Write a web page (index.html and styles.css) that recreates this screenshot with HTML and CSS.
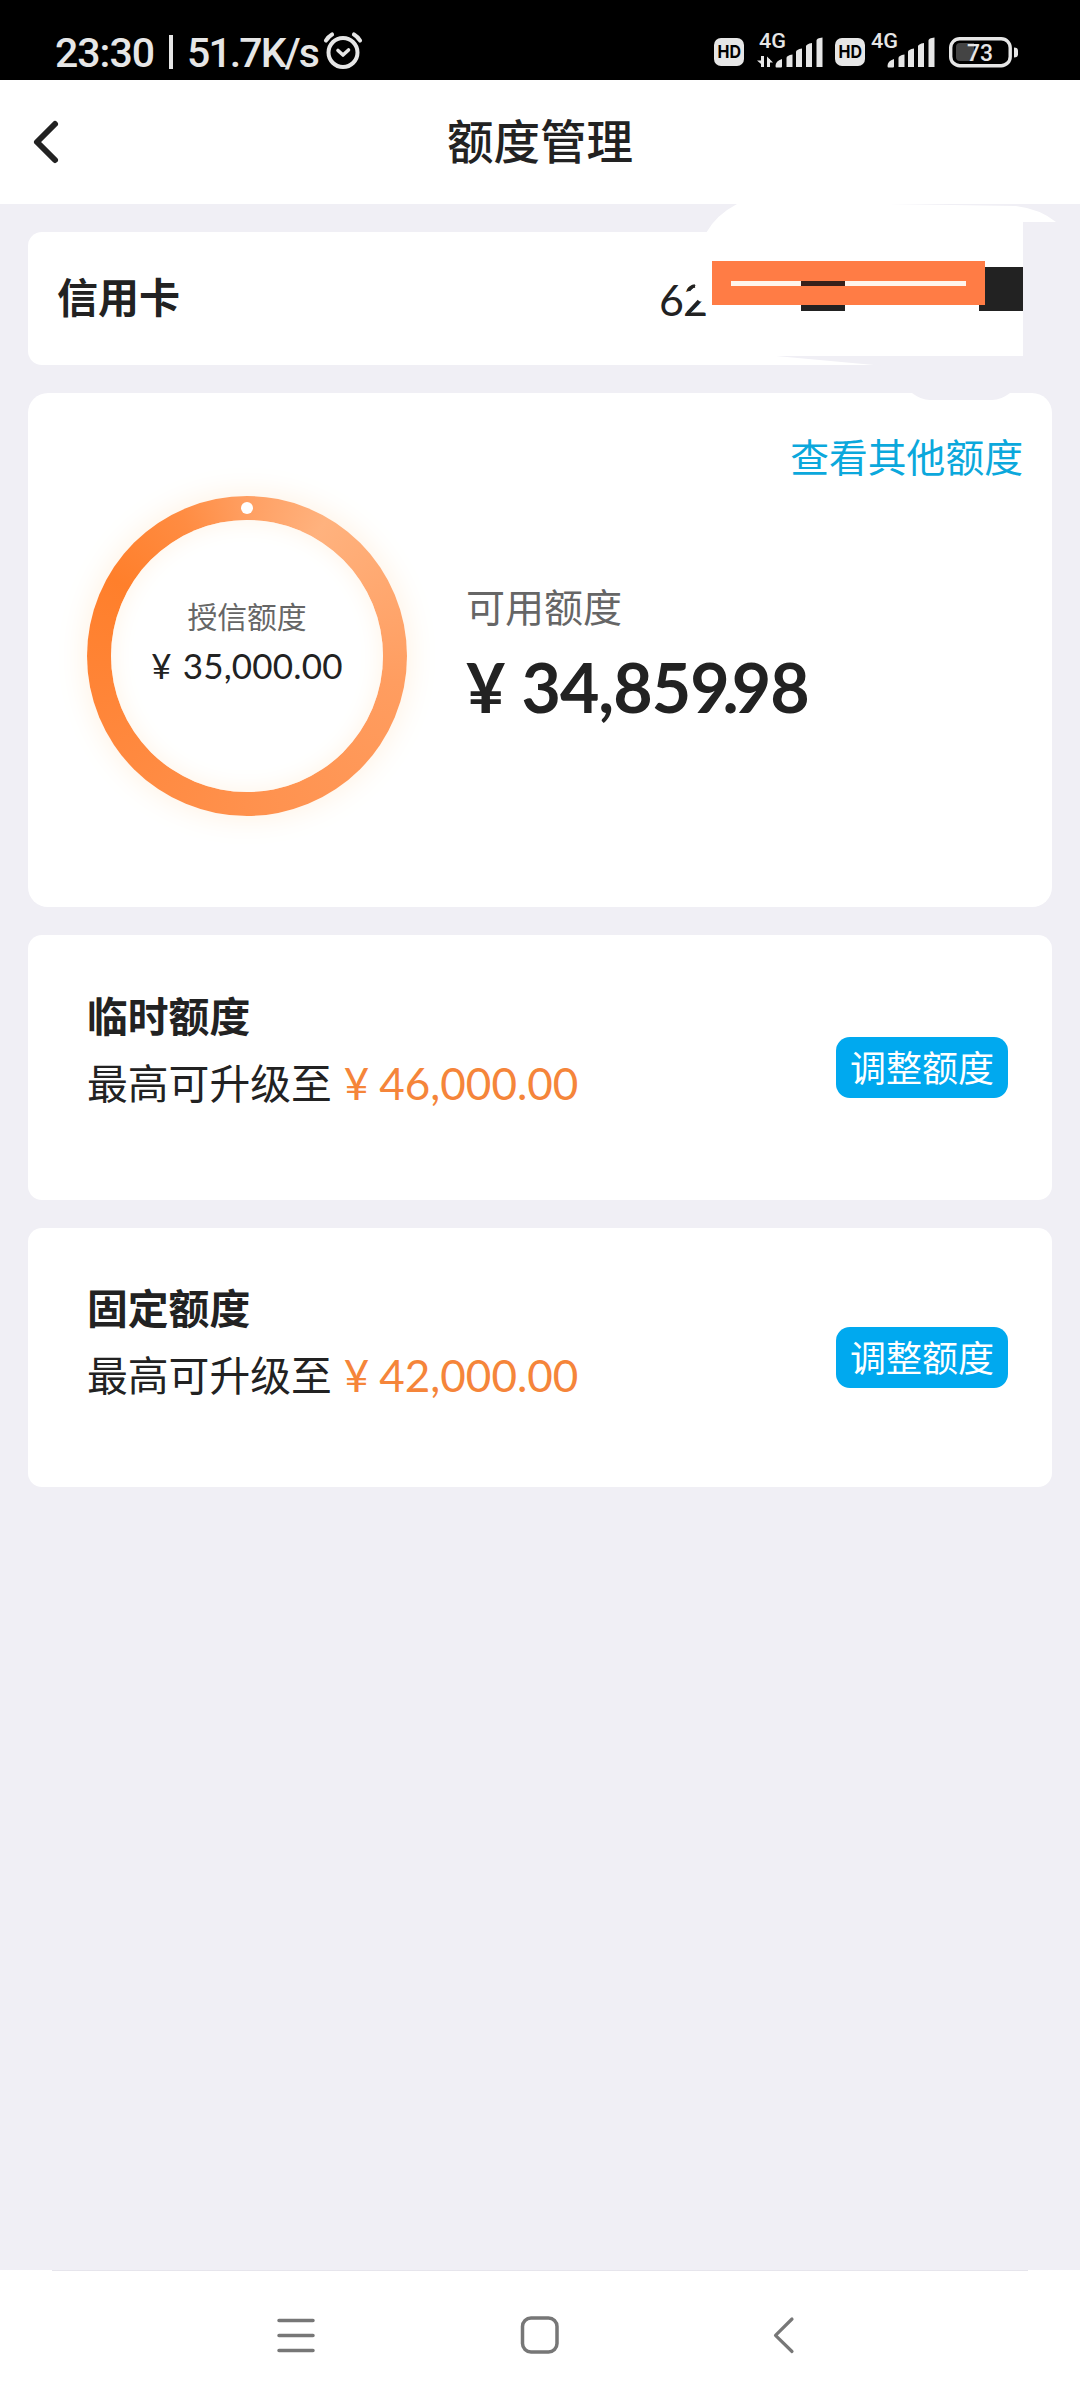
FILE: index.html
```html
<!DOCTYPE html>
<html lang="zh-CN">
<head>
<meta charset="utf-8">
<title>额度管理</title>
<link rel="stylesheet" href="styles.css">
</head>
<body>
<div class="screen">
  <div class="status">
    <span class="clock">23:30</span><span class="bar"></span><span class="speed">51.7K/s</span>
    <svg class="alarm" width="40" height="40" viewBox="0 0 40 40" fill="none" stroke="#e6e6e6" stroke-linecap="round">
      <circle cx="20" cy="21.500" r="14.500" stroke-width="4"/>
      <path d="M3 9.500Q5.500 5.500 9 3.500M37 9.500Q34.500 5.500 31 3.500" stroke-width="4.200"/>
      <path d="M15 19.500l5 4.500 5.500-5" stroke-width="3.600" stroke-linejoin="round"/>
    </svg>
    <svg class="signals" width="306" height="44" viewBox="0 0 306 44" fill="#e6e6e6">
      <rect x="0" y="8" width="30" height="28" rx="7"/>
      <text class="hd" x="3.500" y="28" textLength="23.500" lengthAdjust="spacingAndGlyphs">HD</text>
      <text class="net" x="45" y="17.500" textLength="27" lengthAdjust="spacingAndGlyphs">4G</text>
      <path d="M48.500 26v11M54.500 37v-8" stroke="#e6e6e6" stroke-width="3"/>
      <path d="M43 30.500h7v6zM53 26.500l6 6H53z"/>
      <path id="bars" d="M61.500 36q0-5 6.500-7v7.500q0 1-1 1h-4.500q-1 0-1-1.500zM72.500 28q0-2.500 6-3.500V37h-6zM82 22q0-2.500 6-3.500V37h-6zM92 16.500q0-2.500 6-3.500V37h-6zM102.500 10.500q0-2.500 6-3V37h-6z"/>
      <rect x="121" y="8" width="30" height="28" rx="7"/>
      <text class="hd" x="124.500" y="28" textLength="23.500" lengthAdjust="spacingAndGlyphs">HD</text>
      <text class="net" x="157" y="17.500" textLength="27" lengthAdjust="spacingAndGlyphs">4G</text>
      <use href="#bars" x="112"/>
      <rect x="236.700" y="8.700" width="59.500" height="27" rx="9" fill="none" stroke="#e6e6e6" stroke-width="3.400"/>
      <path d="M246 13h14v18h-14q-4 0-4-4V17q0-4 4-4z" fill="#444"/>
      <path d="M300 17.500q4 0 4 3v4q0 3-4 3z"/>
      <text class="pct" x="253" y="31" textLength="26" lengthAdjust="spacingAndGlyphs">73</text>
    </svg>
  </div>

  <header class="header">
    <svg class="back" width="30" height="48" viewBox="0 0 30 48" fill="none" stroke="#222" stroke-width="6" stroke-linecap="round" stroke-linejoin="round"><path d="M23 6L5 24l18 18"/></svg>
    <h1 class="title">额度管理</h1>
  </header>

  <main class="content">
    <section class="card account">
      <span class="account-name">信用卡</span>
      <span class="account-no">62</span>
      <svg class="redact" width="460" height="200" viewBox="620 204 460 200">
        <path d="M1023 222h57v171h-57z" fill="#f0eff5"/>
        <path d="M706 233Q716 215 737 204H888L1016 206Q1040 209 1056 222H1023V357H900L800 358L712 330z" fill="#fff"/>
        <path d="M776 356L885 366H1023V356z" fill="#f0eff5"/>
        <path d="M912 393Q921 400 930 400H992Q1001 400 1010 393z" fill="#f0eff5"/>
        <path d="M684 292.500l7-2 4-5 14-5v25l-6-4-5 0-4 0-4-2-3-2z" fill="#fff"/>
        <path d="M688.500 290.500Q690.500 286.500 695 286" fill="none" stroke="#222" stroke-width="3.500"/>
        <path d="M699 301L688 313" stroke="#222" stroke-width="3.500"/>
        <path d="M801 281h44v30h-44zM979 267h44v44h-44z" fill="#222"/>
        <path d="M712 261h273v44H712z" fill="#ff7c45"/>
        <path d="M731 281h235v5H731z" fill="#fff4ec"/>
        <path d="M801 281h44v5h-44z" fill="#38201a"/>
      </svg>
    </section>

    <section class="card summary">
      <a class="more">查看其他额度</a>
      <div class="overview">
        <div class="ring">
          <div class="ring-inner">
            <span class="ring-label">授信额度</span>
            <span class="ring-amount"><span class="yen">¥</span><span class="num">35,000.00</span></span>
          </div>
          <i class="dot"></i>
        </div>
        <div class="available">
          <span class="available-label">可用额度</span>
          <span class="available-amount"><span class="yen">¥</span><span class="num">34,85<span class="tight">9.</span>98</span></span>
        </div>
      </div>
    </section>

    <section class="card limit temporary">
      <div class="limit-text">
        <h2 class="limit-title">临时额度</h2>
        <p class="limit-line">最高可升级至<span class="yen">¥</span><span class="num">46,000.00</span></p>
      </div>
      <button class="adjust">调整额度</button>
    </section>

    <section class="card limit fixed">
      <div class="limit-text">
        <h2 class="limit-title">固定额度</h2>
        <p class="limit-line">最高可升级至<span class="yen">¥</span><span class="num">42,000.00</span></p>
      </div>
      <button class="adjust">调整额度</button>
    </section>
  </main>

  <nav class="nav">
    <svg width="40" height="44" viewBox="0 0 40 44" stroke="#777" stroke-width="3.500" stroke-linecap="round"><path d="M3 7.500h34M3 22.500h34M3 37.500h34"/></svg>
    <svg width="40" height="44" viewBox="0 0 40 44" fill="none" stroke="#777" stroke-width="3.500"><rect x="2.500" y="5" width="34.500" height="34" rx="8.500"/></svg>
    <svg width="40" height="44" viewBox="0 0 40 44" fill="none" stroke="#777" stroke-width="3.200" stroke-linecap="round" stroke-linejoin="round"><path d="M28 6L11.500 22.300 28 38.500"/></svg>
  </nav>
</div>
</body>
</html>
```
FILE: styles.css
```css
* { box-sizing: border-box; }
body {
  margin: 0;
  font-family: "Noto Sans CJK SC", sans-serif;
  color: #222;
}
h1, h2, p { margin: 0; }
.screen {
  width: 1080px;
  height: 2400px;
  display: flex;
  flex-direction: column;
  background: #f0eff5;
}

/* status bar */
.status {
  height: 80px;
  background: #000;
  color: #e6e6e6;
  display: flex;
  align-items: flex-start;
  padding: 29px 60px 0 55px;
  font: 500 41px/48px Roboto, sans-serif;
}
.clock { width: 98px; letter-spacing: -1px; }
.bar { width: 4px; height: 34px; margin: 6px 14px 0 16px; background: #e6e6e6; }
.speed { width: 130px; letter-spacing: -1.900px; white-space: nowrap; }
.alarm { margin: 2px 0 0 6px; }
.signals { margin: 1px 0 0 auto; }
.hd { font: 700 18px Inter, sans-serif; fill: #000; }
.net { font: 500 21px Roboto, sans-serif; }
.pct { font: 500 24px Roboto, sans-serif; }

/* header */
.header {
  height: 124px;
  background: #fff;
  display: grid;
  grid-template-columns: 80px 1fr 80px;
  align-items: center;
}
.back { margin-left: 32px; }
.title {
  text-align: center;
  font-size: 46.500px;
  line-height: 60px;
  font-weight: 500;
  padding-bottom: 6px;
}

.content {
  flex: 1;
  padding: 28px;
  display: flex;
  flex-direction: column;
  gap: 28px;
}
.card { background: #fff; border-radius: 14px; }

/* account */
.account {
  position: relative;
  height: 133px;
  padding: 0 345px 0 29px;
  display: flex;
  align-items: center;
  justify-content: space-between;
}
.account-name { font-size: 41px; font-weight: 700; line-height: 60px; padding-bottom: 7px; }
.account-no { font: 400 43px/60px Lato, sans-serif; margin-top: 2px; letter-spacing: -1px; }
.redact { position: absolute; left: 592px; top: -28px; }

/* summary */
.summary {
  height: 514px;
  border-radius: 20px;
  padding: 34px 29px 0;
  display: flex;
  flex-direction: column;
}
.more { align-self: flex-end; font-size: 38.800px; line-height: 56px; color: #0ba8dc; }
.overview { display: flex; margin: 13px 0 0 30px; gap: 59px; }
.ring {
  position: relative;
  width: 320px;
  height: 320px;
  padding: 24px;
  border-radius: 50%;
  background: conic-gradient(#ff9f62 0deg, #ffb27e 30deg, #ff9d60 100deg, #ff914d 180deg, #ff8436 260deg, #ff7f2b 300deg, #ff8c42 335deg, #ff9f62 360deg);
  box-shadow: 0 0 32px #fff0df;
}
.ring-inner {
  height: 272px;
  border-radius: 50%;
  background: #fff;
  box-shadow: inset 0 0 24px #fff3e5;
  display: flex;
  flex-direction: column;
  align-items: center;
  padding-top: 75px;
}
.ring-label { font-size: 29.800px; line-height: 40px; color: #666; }
.ring-amount { font: 400 35px/50px Lato, sans-serif; display: flex; gap: 11px; margin-top: 5px; letter-spacing: 0.200px; }
.dot { position: absolute; left: 154px; top: 6px; width: 12px; height: 12px; border-radius: 50%; background: #fff; }
.available { padding-top: 81px; display: flex; flex-direction: column; }
.available-label { font-size: 39px; line-height: 56px; color: #666; }
.available-amount { font: 700 68px/80px Lato, sans-serif; display: flex; gap: 16px; margin-top: 14px; }
.available-amount .num { letter-spacing: -1px; }
.available-amount .tight { letter-spacing: -7px; }

/* limits */
.limit { display: flex; justify-content: space-between; padding: 0 44px 0 59px; }
.temporary { height: 265px; padding-top: 50px; }
.fixed { height: 259px; padding-top: 49px; }
.limit-title { font-size: 40.800px; line-height: 60px; font-weight: 700; }
.limit-line { font-size: 40.800px; line-height: 60px; margin-top: 7px; display: flex; }
.limit-line .yen, .limit-line .num { font-family: Lato, sans-serif; font-size: 44px; padding-top: 1px; color: #f5853a; }
.limit-line .yen { margin-left: 12px; margin-right: 10px; }
.adjust {
  width: 172px;
  height: 61px;
  margin: 52px 0 0;
  padding: 0 0 3px;
  border: 0;
  border-radius: 14px;
  background: #00a9ef;
  color: #fff;
  font: 400 36px/57px "Noto Sans CJK SC", sans-serif;
}
.fixed .adjust { margin-top: 50px; }

/* system navigation */
.nav {
  height: 130px;
  background: linear-gradient(#e6e5ec, #e6e5ec) center top / 976px 1px no-repeat #fff;
  display: flex;
  justify-content: center;
  gap: 204px;
  padding-top: 43px;
}
```
